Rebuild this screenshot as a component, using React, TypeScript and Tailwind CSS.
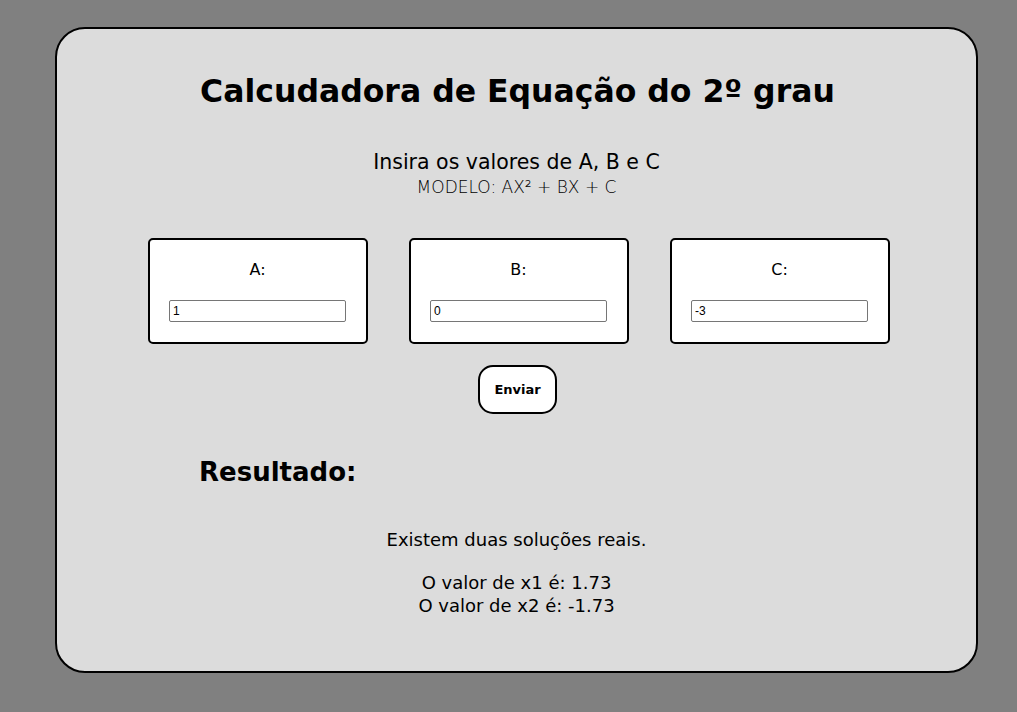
import React from "react";

function CoefBox({ label, value }: { label: string; value: string }) {
  return (
    <div className="w-[220px] h-[106px] bg-white border-2 border-black rounded-[5px] flex flex-col items-center">
      <span className="mt-[20px] text-[16px] leading-[20px]">{label}</span>
      <input
        defaultValue={value}
        className="mt-[20px] w-[177px] h-[22px] border border-[#767676] rounded-[2px] px-[3px] text-[12px] font-['Liberation_Sans',sans-serif] bg-white outline-none"
      />
    </div>
  );
}

export default function App() {
  return (
    <div className="min-h-[712px] w-full bg-[#808080] pt-[27px] px-[55px] pb-[39px] font-['DejaVu_Sans',sans-serif] text-black">
      <div className="w-[923px] h-[646px] bg-[#dcdcdc] border-2 border-black rounded-[30px] flex flex-col">
        <h1 className="mt-[43px] text-center font-bold text-[31.5px] leading-[38px] pl-[2px]">
          Calcudadora de Equação do 2º grau
        </h1>
        <p className="mt-[39px] text-center text-[20.5px] leading-[26px]">Insira os valores de A, B e C</p>
        <p className="mt-[2px] text-center text-[17px] leading-[20px] font-extralight">MODELO: AX² + BX + C</p>
        <div className="mt-[41px] flex justify-center gap-[41px] pl-[4px]">
          <CoefBox label="A:" value="1" />
          <CoefBox label="B:" value="0" />
          <CoefBox label="C:" value="-3" />
        </div>
        <div className="mt-[21px] flex justify-center pl-[2px]">
          <button className="w-[79px] h-[49px] bg-white border-2 border-black rounded-[15px] font-bold text-[13px]">
            Enviar
          </button>
        </div>
        <h2 className="mt-[42px] ml-[142px] font-bold text-[26px] leading-[32px]">Resultado:</h2>
        <div className="mt-[40px] text-center text-[18px] leading-[23px]">
          <p>Existem duas soluções reais.</p>
          <p className="mt-[20px]">O valor de x1 é: 1.73</p>
          <p>O valor de x2 é: -1.73</p>
        </div>
      </div>
    </div>
  );
}
